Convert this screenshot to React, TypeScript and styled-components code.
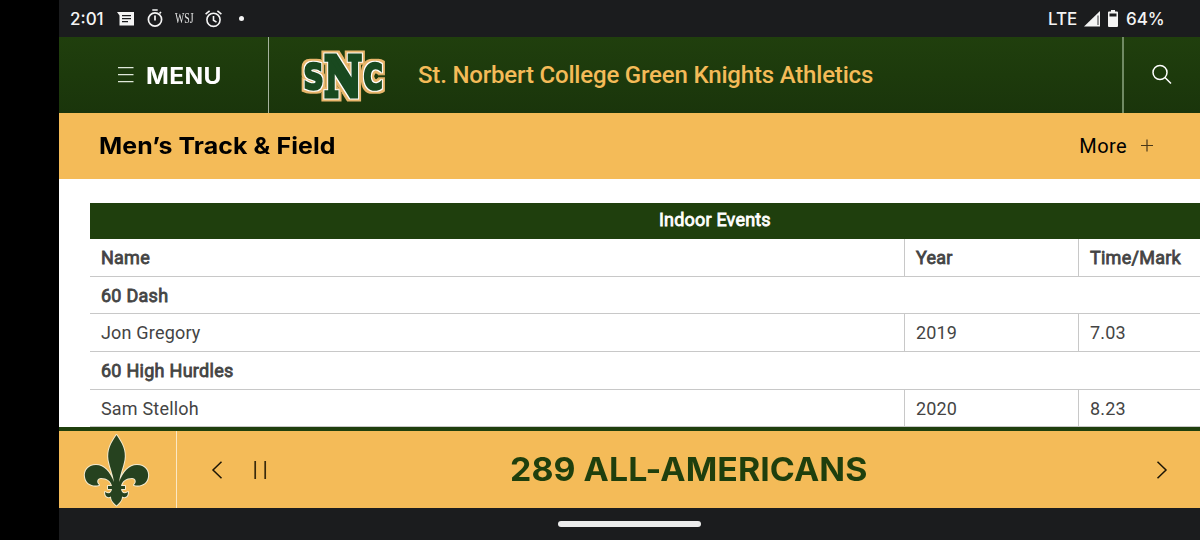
import React from 'react';
import styled, { createGlobalStyle } from 'styled-components';

const GlobalStyle = createGlobalStyle`
  * {
    box-sizing: border-box;
  }

  body {
    margin: 0;
    background: #000;
    font-family: Roboto, 'Liberation Sans', sans-serif;
  }

  svg {
    display: block;
    flex: none;
    overflow: visible;
  }
`;

const Screen = styled.div`
  width: 1200px;
  height: 540px;
  padding-left: 59px;
  display: flex;
  flex-direction: column;
  overflow: hidden;
  background: #000;
  white-space: nowrap;
`;

const StatusBar = styled.div`
  flex: none;
  height: 37px;
  padding: 0 36px 0 11px;
  display: flex;
  justify-content: space-between;
  align-items: center;
  background: #1b1c1e;
  color: #f4f4f4;
  font: 500 17px/36px Inter, sans-serif;
`;

const StatusIcons = styled.div<{ $gap: number }>`
  display: flex;
  align-items: center;
  gap: ${({ $gap }) => $gap}px;
`;

const StatusText = styled.span<{ $width: number }>`
  width: ${({ $width }) => $width}px;
`;

const Dot = styled.div`
  width: 5px;
  height: 5px;
  margin-left: 5px;
  border-radius: 50%;
  background: #f4f4f4;
`;

const Publisher = styled.span`
  color: #e4e4e4;
  font: 14px/36px 'Liberation Serif', serif;
  width: 18px;
  transform: scaleX(0.7);
  transform-origin: left;
`;

const Header = styled.header`
  flex: none;
  height: 76px;
  display: flex;
  align-items: center;
  background: linear-gradient(#203f0d, #1a350b);
`;

const MenuButton = styled.div`
  width: 210px;
  height: 100%;
  padding-left: 59px;
  display: flex;
  align-items: center;
  gap: 12px;
  border-right: 1px solid #a5b39d;
`;

const MenuLabel = styled.span`
  color: #fff;
  font: 700 22.5px/77px Inter, sans-serif;
  letter-spacing: 0.3px;
  transform: scaleX(1.09);
  transform-origin: left;
`;

const Brand = styled.div`
  flex: 1;
  height: 100%;
  padding-left: 30px;
  display: flex;
  align-items: center;
  gap: 31px;
  color: #f4bb58;
  font-size: 24px;
  font-weight: 500;
  letter-spacing: -0.18px;
`;

const SearchButton = styled.div`
  width: 78px;
  height: 100%;
  padding-left: 28px;
  display: flex;
  align-items: center;
  border-left: 2px solid #708a63;
`;

const SportBar = styled.div`
  flex: none;
  height: 66px;
  padding: 0 47px 0 39.5px;
  display: flex;
  justify-content: space-between;
  align-items: center;
  background: #f4bb58;
  color: #000;
`;

const SportTitle = styled.h1`
  margin: 0;
  font: 700 23.5px/66px Inter, sans-serif;
  letter-spacing: 0.1px;
  transform: scaleX(1.06);
  transform-origin: left;
`;

const More = styled.div`
  display: flex;
  align-items: center;
  gap: 14px;
  font-size: 20px;
  letter-spacing: 0.4px;
`;

const Content = styled.main`
  flex: none;
  height: 248px;
  padding: 23.5px 0 0 31.4px;
  overflow: hidden;
  background: #fff;
`;

const Table = styled.div`
  width: 1249px;
  color: #444;
  font-size: 18px;
`;

const Caption = styled.div`
  height: 36px;
  margin-bottom: 0.8px;
  line-height: 33.5px;
  background: #1f3f0d;
  color: #fff;
  text-align: center;
  letter-spacing: 0.2px;
  -webkit-text-stroke: 0.8px currentColor;
`;

const Row = styled.div`
  height: 37.6px;
  display: flex;
  border-bottom: 1px solid #c8c8c8;
  line-height: 37.2px;
`;

const Cell = styled.div<{ $width?: number; $bold?: boolean }>`
  ${({ $width }) => ($width ? `width: ${$width}px;` : 'flex: 1;')}
  padding-left: 10.5px;
  letter-spacing: ${({ $bold }) => ($bold ? 0.28 : 0.2)}px;
  -webkit-text-stroke: ${({ $bold }) => ($bold ? '0.8px currentColor' : '0')};

  & + & {
    border-left: 1px solid #c8c8c8;
  }
`;

const Ticker = styled.footer`
  flex: none;
  height: 81px;
  display: flex;
  border-top: 4px solid #1f3f0d;
  background: #f4bb58;
`;

const TickerLogo = styled.div`
  width: 118px;
  padding: 3px 0 0 25px;
  border-right: 1px solid #fbe8c5;
`;

const TickerBody = styled.div`
  flex: 1;
  padding: 0 32px 0 34px;
  display: flex;
  align-items: center;
`;

const TickerTitle = styled.div`
  flex: 1;
  margin-left: 242px;
  color: #1f3f0d;
  font: 700 32.5px/78px Inter, sans-serif;
  letter-spacing: 0.05px;
  transform: scaleX(1.042);
  transform-origin: left;
`;

const Controls = styled.div`
  display: flex;
  align-items: center;
  gap: 31px;
`;

const NavBar = styled.div`
  flex: none;
  height: 32px;
  padding: 13px 0 0 499px;
  background: #1b1c1e;
`;

const HomeHandle = styled.div`
  width: 143px;
  height: 6px;
  border-radius: 3px;
  background: #ececec;
`;

const MessageIcon = () => (
  <svg width="17" height="16" viewBox="0 0 17 16">
    <path d="M0 1h17v13.500H2.500V4.500z" fill="#f4f4f4" />
    <path d="M5 4.700h9M5 7.700h9M5 10.700h6" stroke="#1b1c1e" strokeWidth="1.300" />
  </svg>
);

const TimerIcon = () => (
  <svg width="16" height="19" viewBox="0 0 16 19" fill="none" stroke="#f4f4f4" strokeWidth="1.700">
    <circle cx="8" cy="10.500" r="6.600" />
    <path d="M5.300 1h5.400M8 6.500V11.500M12.500 4.500l1.500-1.500" />
  </svg>
);

const AlarmIcon = () => (
  <svg width="17" height="18" viewBox="0 0 17 18" fill="none" stroke="#f4f4f4" strokeWidth="1.600">
    <circle cx="8.500" cy="9.800" r="6.600" />
    <path d="M8.500 6v4.300l3 1.800M.6 4.200l4-3.300M16.400 4.200l-4-3.300" />
  </svg>
);

const SignalIcon = () => (
  <svg width="16" height="16" viewBox="0 0 16 16">
    <path d="M0 15.500 16 0v15.500z" fill="#f4f4f4" />
    <path d="M14 4.500v9.500" stroke="#1b1c1e" strokeWidth=".9" />
  </svg>
);

const BatteryIcon = () => (
  <svg width="10" height="17" viewBox="0 0 10 17">
    <path d="M3 0h4v1.500h2q1 0 1 1V16q0 1-1 1H1q-1 0-1-1V2.500q0-1 1-1h2z" fill="#f4f4f4" />
    <path d="M1.500 3.500h7v3h-7z" fill="#1b1c1e" />
  </svg>
);

const SncLogo = () => (
  <svg width="88" height="56" viewBox="0 0 88 56" fontWeight="700">
    <defs>
      <filter id="rim" x="-20%" y="-20%" width="140%" height="140%" colorInterpolationFilters="sRGB">
        <feMorphology in="SourceAlpha" operator="dilate" radius="1" result="rim" />
        <feFlood floodColor="#fff" />
        <feComposite in2="rim" operator="in" />
        <feMerge>
          <feMergeNode />
          <feMergeNode in="SourceGraphic" />
        </feMerge>
      </filter>
      <filter id="edge" x="-20%" y="-20%" width="140%" height="140%" colorInterpolationFilters="sRGB">
        <feMorphology in="SourceAlpha" operator="dilate" radius="2" result="rim" />
        <feFlood floodColor="#e9b66c" />
        <feComposite in2="rim" operator="in" />
        <feMerge>
          <feMergeNode />
          <feMergeNode in="SourceGraphic" />
        </feMerge>
      </filter>
    </defs>
    <g filter="url(#edge)" fill="#19491f" stroke="#19491f" strokeLinejoin="miter">
      <g filter="url(#rim)" fontFamily="DejaVu Sans, sans-serif" strokeWidth="2.600">
        <text x="4.500" y="42" fontSize="36" textLength="20" lengthAdjust="spacingAndGlyphs">S</text>
        <text x="64.500" y="42" fontSize="36" textLength="19" lengthAdjust="spacingAndGlyphs">C</text>
      </g>
      <g filter="url(#rim)" fontFamily="DejaVu Serif, serif" strokeWidth="5">
        <text x="25.500" y="48.500" fontSize="54" textLength="37" lengthAdjust="spacingAndGlyphs">N</text>
      </g>
    </g>
  </svg>
);

const FleurIcon = () => (
  <svg width="66" height="73" viewBox="0 0 66 73" fill="#26421f">
    <path
      stroke="#f3ead0"
      strokeWidth="2"
      strokeLinejoin="round"
      paintOrder="stroke"
      d="M32.500 1C27 9 23 16 24.500 26c1.500 8 4.500 14 5.500 22C26 38 20 31 12 31 4 31 0 37 1 43c1 7 8 10 14 8-3-3-2-7 2-7 6 0 10 3 11 8h-4v3h4c-.5 4-3 5.500-7 3 0 5 3 6 6 4.500 0 4 2.500 6.500 5.500 9 3-2.500 5.500-5 5.500-9 3 1.500 6 .5 6-4.500-4 2.500-6.500 1-7-3h4v-3h-4c1-5 5-8 11-8 4 0 5 4 2 7 6 2 13-1 14-8 1-6-3-12-11-12-8 0-14 7-18 17 1-8 4-14 5.500-22C42 16 38 9 32.500 1z"
    />
  </svg>
);

type RowData = { name: string; year?: string; mark?: string; bold?: boolean };

const rows: RowData[] = [
  { name: 'Name', year: 'Year', mark: 'Time/Mark', bold: true },
  { name: '60 Dash', bold: true },
  { name: 'Jon Gregory', year: '2019', mark: '7.03' },
  { name: '60 High Hurdles', bold: true },
  { name: 'Sam Stelloh', year: '2020', mark: '8.23' },
];

const EventRow = ({ name, year, mark, bold }: RowData) => (
  <Row>
    <Cell $width={year ? 814 : undefined} $bold={bold}>{name}</Cell>
    {year && <Cell $width={174} $bold={bold}>{year}</Cell>}
    {mark && <Cell $bold={bold}>{mark}</Cell>}
  </Row>
);

const App = () => (
  <>
    <GlobalStyle />
    <Screen>
      <StatusBar>
        <StatusIcons $gap={12.3}>
          <StatusText $width={35}>2:01</StatusText>
          <MessageIcon />
          <TimerIcon />
          <Publisher>WSJ</Publisher>
          <AlarmIcon />
          <Dot />
        </StatusIcons>
        <StatusIcons $gap={8}>
          <StatusText $width={28}>LTE</StatusText>
          <SignalIcon />
          <BatteryIcon />
          <StatusText $width={38}>64%</StatusText>
        </StatusIcons>
      </StatusBar>
      <Header>
        <MenuButton>
          <svg width="16" height="17" viewBox="0 0 16 17" stroke="#dfe8da" strokeWidth="1.300">
            <path d="M0 .7h15.500M0 7.700h15.500M0 14.700h15.500" />
          </svg>
          <MenuLabel>MENU</MenuLabel>
        </MenuButton>
        <Brand>
          <SncLogo />
          St. Norbert College Green Knights Athletics
        </Brand>
        <SearchButton>
          <svg width="20" height="20" viewBox="0 0 20 20" fill="none" stroke="#fff" strokeWidth="1.500">
            <circle cx="8" cy="7.500" r="7" />
            <path d="m13 12.500 6 6" />
          </svg>
        </SearchButton>
      </Header>
      <SportBar>
        <SportTitle>Men’s Track &amp; Field</SportTitle>
        <More>
          More
          <svg width="12" height="12" viewBox="0 0 12 12" stroke="#4a3819" strokeWidth="1.200">
            <path d="M6 -.5v12M0 5.500h12" />
          </svg>
        </More>
      </SportBar>
      <Content>
        <Table>
          <Caption>Indoor Events</Caption>
          {rows.map((row) => (
            <EventRow key={row.name} {...row} />
          ))}
        </Table>
      </Content>
      <Ticker>
        <TickerLogo>
          <FleurIcon />
        </TickerLogo>
        <TickerBody>
          <Controls>
            <svg width="12" height="18" viewBox="0 0 12 18" fill="none" stroke="#1d1606" strokeWidth="1.500">
              <path d="M10.500 .7 2 9l8.500 8.300" />
            </svg>
            <svg width="14" height="18" viewBox="0 0 14 18" stroke="#3a2a0c" strokeWidth="1.700">
              <path d="M1.200 0v18M11.200 0v18" />
            </svg>
          </Controls>
          <TickerTitle>289 ALL-AMERICANS</TickerTitle>
          <svg width="12" height="18" viewBox="0 0 12 18" fill="none" stroke="#1d1606" strokeWidth="1.500">
            <path d="M1.500 .7 10 9l-8.500 8.300" />
          </svg>
        </TickerBody>
      </Ticker>
      <NavBar>
        <HomeHandle />
      </NavBar>
    </Screen>
  </>
);

export default App;
